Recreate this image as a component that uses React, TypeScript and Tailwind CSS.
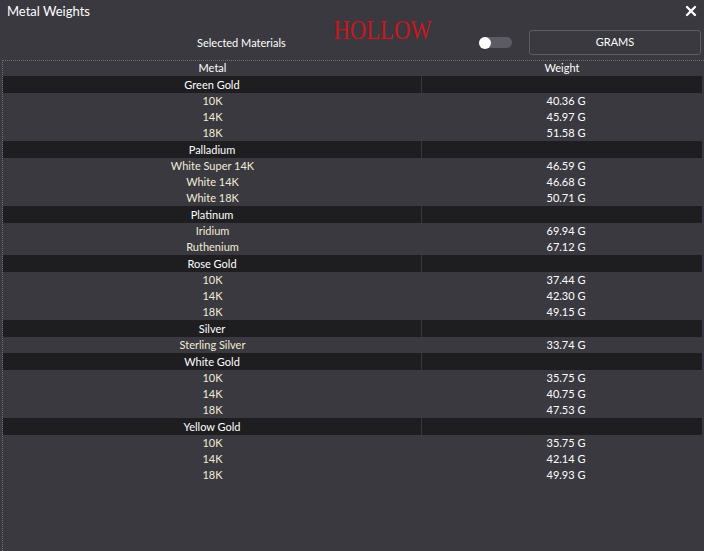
import { X } from "lucide-react";

type Group = { name: string; items: [string, string][] };

const groups: Group[] = [
  { name: "Green Gold", items: [["10K", "40.36 G"], ["14K", "45.97 G"], ["18K", "51.58 G"]] },
  { name: "Palladium", items: [["White Super 14K", "46.59 G"], ["White 14K", "46.68 G"], ["White 18K", "50.71 G"]] },
  { name: "Platinum", items: [["Iridium", "69.94 G"], ["Ruthenium", "67.12 G"]] },
  { name: "Rose Gold", items: [["10K", "37.44 G"], ["14K", "42.30 G"], ["18K", "49.15 G"]] },
  { name: "Silver", items: [["Sterling Silver", "33.74 G"]] },
  { name: "White Gold", items: [["10K", "35.75 G"], ["14K", "40.75 G"], ["18K", "47.53 G"]] },
  { name: "Yellow Gold", items: [["10K", "35.75 G"], ["14K", "42.14 G"], ["18K", "49.93 G"]] },
];

const App = () => {
  return (
    <div className="w-[704px] h-[551px] overflow-hidden bg-[#3a3940] text-white font-['Lato',sans-serif] flex flex-col">
      {/* title bar */}
      <div className="flex items-start justify-between pl-[7px] pr-[5px] pt-[2px] h-[20px] shrink-0">
        <span className="text-[13px] leading-[18px]">Metal Weights</span>
        <X className="w-[16px] h-[16px] mt-[1px]" strokeWidth={3.5} />
      </div>

      {/* controls */}
      <div className="relative h-[40px] shrink-0">
        <span className="absolute left-[322px] top-[-6px] w-[121px] text-center font-['Liberation_Serif',serif] text-[28px] leading-[32px] text-[#c8161f] inline-block scale-x-[0.81]">
          HOLLOW
        </span>
        <div className="flex items-center h-[40px] pt-[5px]">
          <span className="ml-[197px] w-[282px] shrink-0 whitespace-nowrap text-[11px] leading-[14px]">Selected Materials</span>
          <div className="w-[33px] h-[11px] shrink-0 rounded-full bg-[#5c5b63] relative">
            <div className="absolute left-0 top-[-0.5px] w-[12px] h-[12px] rounded-full bg-white" />
          </div>
          <button className="ml-[17px] w-[172px] h-[25px] shrink-0 rounded-[3px] border border-[#5e5d64] text-[11px] text-center">
            GRAMS
          </button>
        </div>
      </div>

      {/* table */}
      <div className="flex-1 ml-[2px] border-l border-t border-dotted border-[#6e6d74] pr-[2px]">
        <div className="flex h-[15px] text-[11px] leading-[13px]">
          <div className="w-[419px] text-center">Metal</div>
          <div className="flex-1 text-center">Weight</div>
        </div>
        {groups.map((g) => (
          <div key={g.name}>
            <div className="flex h-[17px] bg-[#1e1e21] text-[11px] leading-[17px]">
              <div className="w-[418px] text-center">{g.name}</div>
              <div className="w-px bg-[#38373d]" />
              <div className="flex-1" />
            </div>
            {g.items.map(([m, w], i) => (
              <div key={i} className="flex h-[16px] text-[11px] leading-[16px]">
                <div className="w-[419px] text-center text-[#f1ecd6]">{m}</div>
                <div className="flex-1 text-center pl-[8px]">{w}</div>
              </div>
            ))}
          </div>
        ))}
      </div>
    </div>
  );
};

export default App;
